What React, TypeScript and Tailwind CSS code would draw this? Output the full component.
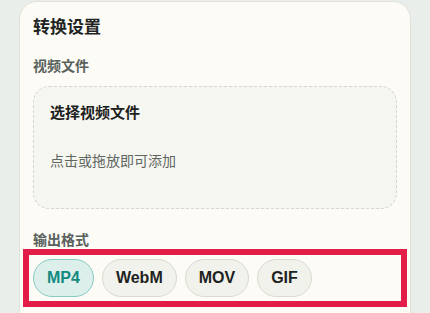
import React from "react";

const cjk = { fontFamily: '"Noto Sans CJK SC", "Noto Sans", sans-serif' };
const latin = { fontFamily: '"Liberation Sans", Arial, "Noto Sans CJK SC", sans-serif' };

export default function App() {
  const formats = ["MP4", "WebM", "MOV", "GIF"];
  return (
    <div className="w-[430px] h-[313px] overflow-hidden bg-[#e9eeea] pt-[1px] pl-[19px]" style={cjk}>
      <div className="w-[392px] h-[340px] rounded-[18px] border border-[#e2e2da] bg-[#fcfbf6] px-[13px] pt-[12px]">
        <div className="text-[17px] leading-[24px] font-bold text-[#1e2422]">转换设置</div>
        <div className="mt-[17px] text-[14px] leading-[20px] font-semibold text-[#58615c]">视频文件</div>
        <div className="mt-[11px] h-[123px] rounded-[16px] border border-dashed border-[#d6d6ce] bg-[#f6f6f1] px-[16px] pt-[15px]">
          <div className="text-[15px] leading-[20px] font-bold text-[#1c2120]">选择视频文件</div>
          <div className="mt-[28px] text-[14px] leading-[20px] text-[#5f6662]">点击或拖放即可添加</div>
        </div>
        <div className="mt-[20px] text-[14px] leading-[20px] font-semibold text-[#58615c]">输出格式</div>
        <div className="mt-[10px] flex h-[38px] items-center gap-[8px] outline-[6px] outline-solid outline-[#e11d48] outline-offset-[4px]">
          {formats.map((f, i) => (
            <div
              key={f}
              className={
                i === 0
                  ? "flex h-[38px] items-center rounded-full border border-[#86cbc2] bg-[#dcefeb] px-[13px] text-[16px] font-bold text-[#138a80]"
                  : "flex h-[38px] items-center rounded-full border border-[#dadad2] bg-[#f2f2ed] px-[13px] text-[16px] font-bold text-[#1e2321]"
              }
              style={latin}
            >
              {f}
            </div>
          ))}
        </div>
      </div>
    </div>
  );
}
